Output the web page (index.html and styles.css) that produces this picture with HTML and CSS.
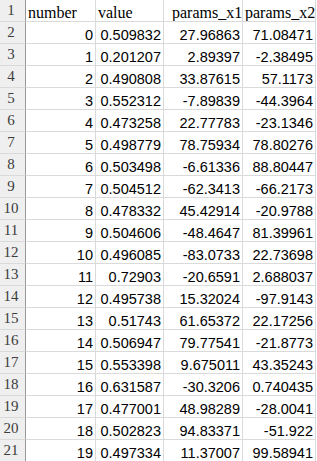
FILE: index.html
```html
<!DOCTYPE html>
<html lang="en">
<head>
<meta charset="utf-8">
<title>Sheet</title>
<link rel="stylesheet" href="styles.css">
</head>
<body>
<div class="sheet">
  <div class="rh">1</div><div class="c hd">number</div><div class="c hd">value</div><div class="c hd hd-x1">params_x1</div><div class="c hd">params_x2</div>
  <div class="rh">2</div><div class="c n">0</div><div class="c n">0.509832</div><div class="c n">27.96863</div><div class="c n">71.08471</div>
  <div class="rh">3</div><div class="c n">1</div><div class="c n">0.201207</div><div class="c n">2.89397</div><div class="c n">-2.38495</div>
  <div class="rh">4</div><div class="c n">2</div><div class="c n">0.490808</div><div class="c n">33.87615</div><div class="c n">57.1173</div>
  <div class="rh">5</div><div class="c n">3</div><div class="c n">0.552312</div><div class="c n">-7.89839</div><div class="c n">-44.3964</div>
  <div class="rh">6</div><div class="c n">4</div><div class="c n">0.473258</div><div class="c n">22.77783</div><div class="c n">-23.1346</div>
  <div class="rh">7</div><div class="c n">5</div><div class="c n">0.498779</div><div class="c n">78.75934</div><div class="c n">78.80276</div>
  <div class="rh">8</div><div class="c n">6</div><div class="c n">0.503498</div><div class="c n">-6.61336</div><div class="c n">88.80447</div>
  <div class="rh">9</div><div class="c n">7</div><div class="c n">0.504512</div><div class="c n">-62.3413</div><div class="c n">-66.2173</div>
  <div class="rh">10</div><div class="c n">8</div><div class="c n">0.478332</div><div class="c n">45.42914</div><div class="c n">-20.9788</div>
  <div class="rh">11</div><div class="c n">9</div><div class="c n">0.504606</div><div class="c n">-48.4647</div><div class="c n">81.39961</div>
  <div class="rh">12</div><div class="c n">10</div><div class="c n">0.496085</div><div class="c n">-83.0733</div><div class="c n">22.73698</div>
  <div class="rh">13</div><div class="c n">11</div><div class="c n">0.72903</div><div class="c n">-20.6591</div><div class="c n">2.688037</div>
  <div class="rh">14</div><div class="c n">12</div><div class="c n">0.495738</div><div class="c n">15.32024</div><div class="c n">-97.9143</div>
  <div class="rh">15</div><div class="c n">13</div><div class="c n">0.51743</div><div class="c n">61.65372</div><div class="c n">22.17256</div>
  <div class="rh">16</div><div class="c n">14</div><div class="c n">0.506947</div><div class="c n">79.77541</div><div class="c n">-21.8773</div>
  <div class="rh">17</div><div class="c n">15</div><div class="c n">0.553398</div><div class="c n">9.675011</div><div class="c n">43.35243</div>
  <div class="rh">18</div><div class="c n">16</div><div class="c n">0.631587</div><div class="c n">-30.3206</div><div class="c n">0.740435</div>
  <div class="rh">19</div><div class="c n">17</div><div class="c n">0.477001</div><div class="c n">48.98289</div><div class="c n">-28.0041</div>
  <div class="rh">20</div><div class="c n">18</div><div class="c n">0.502823</div><div class="c n">94.83371</div><div class="c n">-51.922</div>
  <div class="rh">21</div><div class="c n">19</div><div class="c n">0.497334</div><div class="c n">11.37007</div><div class="c n">99.58941</div>
</div>
</body>
</html>
```
FILE: styles.css
```css
html, body {
  margin: 0;
  padding: 0;
  background: #ffffff;
}

.sheet {
  display: grid;
  grid-template-columns: 26px 70px 68px 79px 73px;
  grid-auto-rows: 22px;
  width: 316px;
}

.rh,
.c {
  box-sizing: border-box;
  height: 22px;
  border-bottom: 1px solid #dadada;
  border-right: 1px solid #dadada;
  display: flex;
  align-items: flex-end;
  white-space: nowrap;
  overflow: hidden;
}

.rh {
  background: #efefef;
  border-right: 1px solid #9a9a9a;
  justify-content: center;
  padding-right: 3px;
  padding-bottom: 2px;
  font-family: "Liberation Serif", serif;
  font-size: 15px;
  line-height: 17px;
  color: #3c3c3c;
}

.hd {
  font-family: "Liberation Serif", serif;
  font-size: 16px;
  line-height: 17px;
  color: #000;
  padding-left: 2px;
}

.hd-x1 {
  padding-left: 8px;
}

.n {
  font-family: "Liberation Sans", Arial, sans-serif;
  font-size: 14.5px;
  line-height: 16px;
  color: #000;
  justify-content: flex-end;
  padding-right: 2px;
}
```
